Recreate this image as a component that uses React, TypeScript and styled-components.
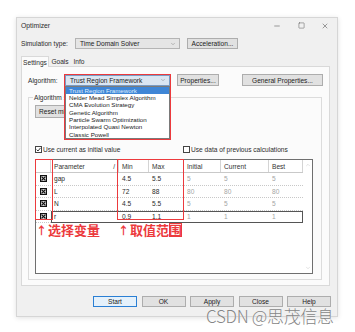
import React from 'react';
import styled, { createGlobalStyle } from 'styled-components';
import { Minus, Square, X, ChevronDown, ChevronUp } from 'lucide-react';

const GlobalStyle = createGlobalStyle`
  html, body {
    margin: 0;
    padding: 0;
    background: #ffffff;
  }
  body {
    font-family: "Liberation Sans", Arial, sans-serif;
  }
`;

const RED = '#ec3a3d';

const Page = styled.div`
  position: relative;
  width: 355px;
  height: 332px;
  overflow: hidden;
  box-sizing: border-box;
  padding: 17px 0 0 16px;
`;

const Window = styled.div`
  width: 322px;
  height: 300px;
  box-sizing: border-box;
  display: flex;
  flex-direction: column;
  background: #f0f0f0;
  border: 1px solid #d6d6d6;
  box-shadow: 0 1px 5px rgba(0, 0, 0, 0.12);
  font-size: 6.6px;
  color: #2c2c2c;
`;

const TitleBar = styled.div`
  height: 15px;
  display: flex;
  align-items: center;
  padding-left: 4px;
  font-size: 6.8px;
`;

const Title = styled.div`
  flex: 1;
`;

const WinControl = styled.div`
  width: 24px;
  height: 15px;
  display: flex;
  align-items: center;
  justify-content: center;
  color: #333;
`;

const Body = styled.div`
  padding: 0 4px;
  display: flex;
  flex-direction: column;
`;

const Row = styled.div<{ $mt?: number }>`
  display: flex;
  align-items: center;
  margin-top: ${p => p.$mt ?? 0}px;
`;

const Label = styled.div<{ $w: number }>`
  width: ${p => p.$w}px;
  flex-shrink: 0;
`;

const Select = styled.div<{ $w: number; $focus?: boolean }>`
  position: relative;
  width: ${p => p.$w}px;
  height: 11px;
  box-sizing: border-box;
  display: flex;
  align-items: center;
  justify-content: space-between;
  padding: 0 3px 0 4px;
  background: ${p => (p.$focus ? '#dbe6f2' : '#e5e5e5')};
  border: 1px solid ${p => (p.$focus ? '#7a9cc4' : '#b4b4b4')};
  color: #222;
  white-space: nowrap;
`;

const Button = styled.div<{ $w: number; $h?: number; $ml?: number; $primary?: boolean; $left?: boolean }>`
  width: ${p => p.$w}px;
  height: ${p => p.$h ?? 11}px;
  margin-left: ${p => p.$ml ?? 0}px;
  box-sizing: border-box;
  flex-shrink: 0;
  display: flex;
  align-items: center;
  justify-content: ${p => (p.$left ? 'flex-start' : 'center')};
  padding-left: ${p => (p.$left ? 3 : 0)}px;
  background: ${p => (p.$primary ? '#e5f1fb' : '#e1e1e1')};
  border: 1px solid ${p => (p.$primary ? '#2a7fd4' : '#adadad')};
  color: #222;
  white-space: nowrap;
  overflow: hidden;
`;

const Tabs = styled.div`
  display: flex;
  align-items: flex-end;
  height: 11px;
  margin-top: 6px;
  position: relative;
  z-index: 1;
`;

const Tab = styled.div<{ $active?: boolean; $w: number }>`
  width: ${p => p.$w}px;
  height: ${p => (p.$active ? 11 : 10)}px;
  box-sizing: border-box;
  display: flex;
  align-items: center;
  justify-content: center;
  background: ${p => (p.$active ? '#fbfbfb' : 'transparent')};
  border: 1px solid ${p => (p.$active ? '#d9d9d9' : 'transparent')};
  border-bottom: none;
  margin-bottom: ${p => (p.$active ? -1 : 0)}px;
`;

const TabPanel = styled.div`
  width: 309px;
  height: 220px;
  box-sizing: border-box;
  background: #fbfbfb;
  border: 1px solid #d9d9d9;
  padding: 7px 0 0 6px;
  display: flex;
  flex-direction: column;
`;

const ComboWrap = styled.div`
  position: relative;
  z-index: 5;
`;

const DropList = styled.div`
  position: absolute;
  left: 0;
  top: 11px;
  width: 105px;
  box-sizing: border-box;
  background: #ffffff;
  border: 1px solid #7a7a7a;
  font-size: 6.2px;
`;

const DropItem = styled.div<{ $sel?: boolean }>`
  height: 7.4px;
  line-height: 7.4px;
  padding-left: 3px;
  white-space: nowrap;
  background: ${p => (p.$sel ? '#3f86d6' : 'transparent')};
  color: ${p => (p.$sel ? '#dfeeff' : '#222')};
`;

const RedBox = styled.div<{ $l: number; $t: number; $w: number; $h: number }>`
  position: absolute;
  left: ${p => p.$l}px;
  top: ${p => p.$t}px;
  width: ${p => p.$w}px;
  height: ${p => p.$h}px;
  box-sizing: border-box;
  border: 1.5px solid ${RED};
  pointer-events: none;
`;

const GroupBox = styled.div`
  position: relative;
  width: 294px;
  height: 183px;
  box-sizing: border-box;
  margin-top: 11px;
  border: 1px solid #dcdcdc;
  padding: 6px 0 0 6px;
  display: flex;
  flex-direction: column;
`;

const Legend = styled.div`
  position: absolute;
  left: 4px;
  top: -4px;
  padding: 0 1px;
  background: #fbfbfb;
`;

const CheckRow = styled.div`
  display: flex;
  align-items: center;
  height: 10px;
  margin-top: 26px;
`;

const CheckItem = styled.label<{ $w: number }>`
  width: ${p => p.$w}px;
  display: flex;
  align-items: center;
  gap: 1px;
`;

const Box = styled.span`
  width: 7px;
  height: 7px;
  box-sizing: border-box;
  border: 1px solid #444;
  background: #fff;
  display: flex;
  align-items: center;
  justify-content: center;
`;

const Table = styled.div`
  position: relative;
  width: 278px;
  height: 115px;
  box-sizing: border-box;
  margin-top: 5px;
  display: flex;
  background: #ffffff;
  border: 1px solid #6f6f6f;
`;

const GridArea = styled.div`
  width: 267px;
  display: flex;
  flex-direction: column;
`;

const COLS = '15px 68px 30px 35px 37px 48px 34px';

const HeadRow = styled.div`
  display: grid;
  grid-template-columns: ${COLS};
  height: 12px;
  border-bottom: 1px solid #c9c9c9;
`;

const HeadCell = styled.div`
  display: flex;
  align-items: center;
  justify-content: space-between;
  padding: 0 3px;
  border-right: 1px solid #d4d4d4;
  color: #333;
`;

const DataRow = styled.div<{ $focus?: boolean }>`
  position: relative;
  display: grid;
  grid-template-columns: ${COLS};
  height: 11.5px;
  border-bottom: 1px dotted #c8c8c8;

  &::after {
    content: '';
    display: ${p => (p.$focus ? 'block' : 'none')};
    position: absolute;
    left: 15px;
    right: 0;
    top: 0;
    bottom: -1px;
    border: 1px solid #555;
  }
`;

const Cell = styled.div<{ $dim?: boolean; $center?: boolean }>`
  display: flex;
  align-items: center;
  justify-content: ${p => (p.$center ? 'center' : 'flex-start')};
  padding-left: ${p => (p.$center ? 0 : 3)}px;
  color: ${p => (p.$dim ? '#a5a5a5' : '#2a2a2a')};
`;

const ScrollBar = styled.div`
  flex: 1;
  display: flex;
  flex-direction: column;
  justify-content: space-between;
  align-items: center;
  padding: 2px 0;
  color: #b5b5b5;
`;

const Note = styled.div<{ $l: number }>`
  position: absolute;
  left: ${p => p.$l}px;
  top: 63px;
  display: flex;
  align-items: center;
  color: ${RED};
  font-family: "Noto Sans CJK SC", sans-serif;
  font-weight: 700;
  font-size: 13px;
  line-height: 14px;
  white-space: nowrap;
`;

const Arrow = styled.span`
  font-size: 11px;
  margin-right: 1px;
`;

const Marked = styled.span`
  outline: 1px solid ${RED};
  outline-offset: -1px;
`;

const Footer = styled.div`
  display: flex;
  justify-content: flex-end;
  gap: 4.5px;
  padding-right: 2px;
  margin-top: 10px;
`;

const Watermark = styled.div`
  position: absolute;
  left: 206px;
  top: 303px;
  font-family: "Noto Sans CJK SC", "Liberation Sans", sans-serif;
  font-weight: 300;
  font-size: 17px;
  color: #858585;
  letter-spacing: -0.3px;
  white-space: nowrap;
  text-shadow: 0 0 1px #fff;
`;

const CheckedMark = () => (
  <svg width="7" height="7" viewBox="0 0 7 7">
    <rect x="0.6" y="0.6" width="5.8" height="5.8" fill="none" stroke="#111" strokeWidth="1.2" />
    <path d="M1.6 1.6 L5.4 5.4 M5.4 1.6 L1.6 5.4" stroke="#111" strokeWidth="1.3" />
  </svg>
);

const algorithms = [
  'Trust Region Framework',
  'Nelder Mead Simplex Algorithm',
  'CMA Evolution Strategy',
  'Genetic Algorithm',
  'Particle Swarm Optimization',
  'Interpolated Quasi Newton',
  'Classic Powell',
];

const params = [
  { name: 'gap', min: '4.5', max: '5.5', init: '5', cur: '5', best: '5' },
  { name: 'L', min: '72', max: '88', init: '80', cur: '80', best: '80' },
  { name: 'N', min: '4.5', max: '5.5', init: '5', cur: '5', best: '5' },
  { name: 'r', min: '0.9', max: '1.1', init: '1', cur: '1', best: '1' },
];

export default function App() {
  return (
    <Page>
      <GlobalStyle />
      <Window>
        <TitleBar>
          <Title>Optimizer</Title>
          <WinControl><Minus size={8} strokeWidth={1.4} /></WinControl>
          <WinControl><Square size={7} strokeWidth={1.4} /></WinControl>
          <WinControl><X size={8} strokeWidth={1.4} /></WinControl>
        </TitleBar>
        <Body>
          <Row $mt={5}>
            <Label $w={54}>Simulation type:</Label>
            <Select $w={105}>
              <span>Time Domain Solver</span>
              <ChevronDown size={6} strokeWidth={1.5} color="#666" />
            </Select>
            <Button $w={51} $ml={7}>Acceleration...</Button>
          </Row>

          <Tabs>
            <Tab $w={28} $active>Settings</Tab>
            <Tab $w={22}>Goals</Tab>
            <Tab $w={16}>Info</Tab>
          </Tabs>

          <TabPanel>
            <Row>
              <Label $w={37}>Algorithm:</Label>
              <ComboWrap>
                <Select $w={105} $focus>
                  <span>Trust Region Framework</span>
                  <ChevronDown size={6} strokeWidth={1.5} color="#666" />
                </Select>
                <DropList>
                  {algorithms.map((a, i) => (
                    <DropItem key={a} $sel={i === 0}>{a}</DropItem>
                  ))}
                </DropList>
                <RedBox $l={-1} $t={-1} $w={107} $h={66} />
              </ComboWrap>
              <Button $w={42} $h={12} $ml={7}>Properties...</Button>
              <Button $w={81} $h={12} $ml={23}>General Properties...</Button>
            </Row>

            <GroupBox>
              <Legend>Algorithm settings</Legend>
              <Row $mt={1}>
                <Button $w={56} $h={13} $left>Reset min</Button>
              </Row>

              <CheckRow>
                <CheckItem $w={148}>
                  <Box>
                    <svg width="5" height="5" viewBox="0 0 5 5">
                      <path d="M0.6 2.6 L2 4 L4.5 0.9" fill="none" stroke="#222" strokeWidth="0.9" />
                    </svg>
                  </Box>
                  Use current as initial value
                </CheckItem>
                <CheckItem $w={130}>
                  <Box />
                  Use data of previous calculations
                </CheckItem>
              </CheckRow>

              <Table>
                <GridArea>
                  <HeadRow>
                    <HeadCell />
                    <HeadCell>
                      <span>Parameter</span>
                      <span>/</span>
                    </HeadCell>
                    <HeadCell>Min</HeadCell>
                    <HeadCell>Max</HeadCell>
                    <HeadCell>Initial</HeadCell>
                    <HeadCell>Current</HeadCell>
                    <HeadCell>Best</HeadCell>
                  </HeadRow>
                  {params.map((p, i) => (
                    <DataRow key={p.name} $focus={i === params.length - 1}>
                      <Cell $center><CheckedMark /></Cell>
                      <Cell>{p.name}</Cell>
                      <Cell>{p.min}</Cell>
                      <Cell>{p.max}</Cell>
                      <Cell $dim>{p.init}</Cell>
                      <Cell $dim>{p.cur}</Cell>
                      <Cell $dim>{p.best}</Cell>
                    </DataRow>
                  ))}
                </GridArea>
                <ScrollBar>
                  <ChevronUp size={6} strokeWidth={1.5} />
                  <ChevronDown size={6} strokeWidth={1.5} />
                </ScrollBar>

                <RedBox $l={-1} $t={-1} $w={18} $h={61} />
                <RedBox $l={81} $t={-1} $w={67} $h={61} />
                <Note $l={0}>
                  <Arrow>↑</Arrow>选择变量
                </Note>
                <Note $l={82}>
                  <Arrow>↑</Arrow>取值范<Marked>围</Marked>
                </Note>
              </Table>
            </GroupBox>
          </TabPanel>

          <Footer>
            <Button $w={44} $primary>Start</Button>
            <Button $w={44}>OK</Button>
            <Button $w={44}>Apply</Button>
            <Button $w={44}>Close</Button>
            <Button $w={44}>Help</Button>
          </Footer>
        </Body>
      </Window>
      <Watermark>CSDN @思茂信息</Watermark>
    </Page>
  );
}
